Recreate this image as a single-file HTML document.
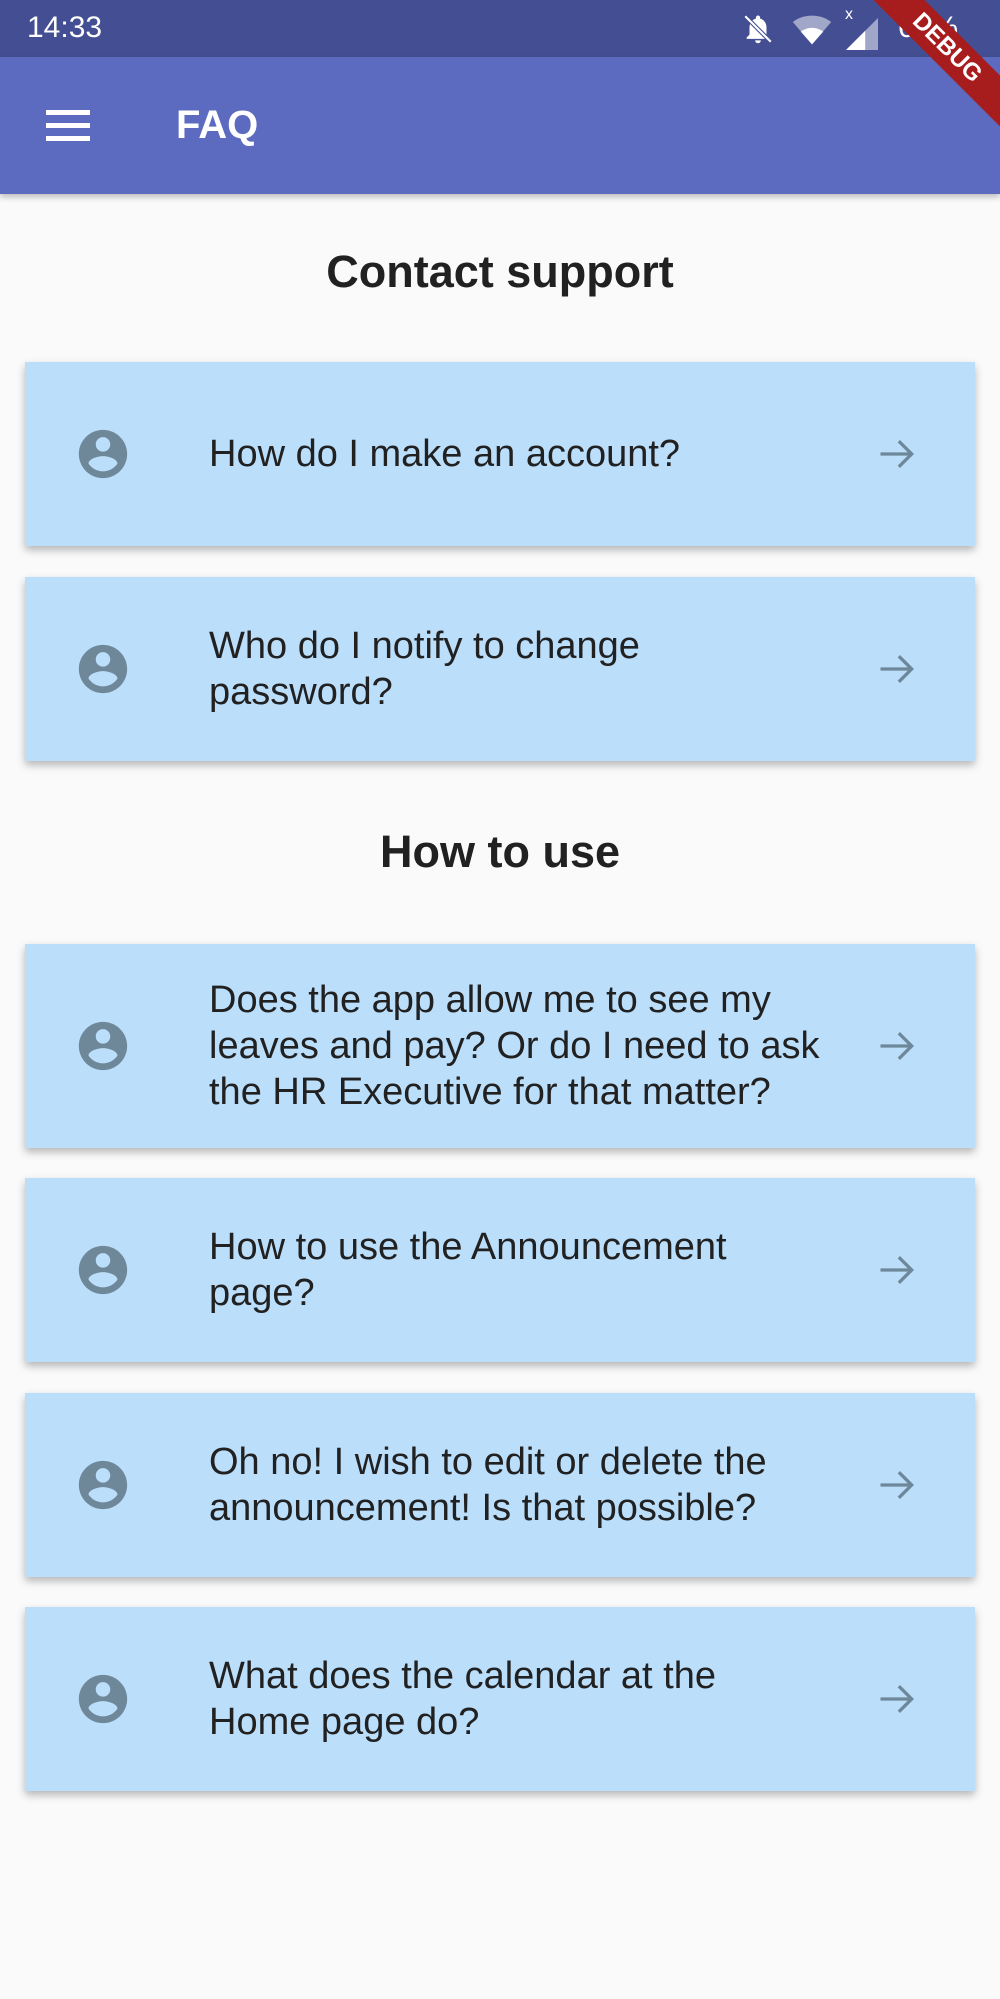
<!DOCTYPE html>
<html><head><meta charset="utf-8">
<style>
*{margin:0;padding:0;box-sizing:border-box}
body{width:1000px;height:1999px;background:#fafafa;font-family:"Liberation Sans",sans-serif;position:relative;overflow:hidden}
.status{position:absolute;left:0;top:0;width:1000px;height:57px;background:#434f92;color:#fff}
.time{position:absolute;left:27px;top:11px;font-size:30px}
.bar{position:absolute;left:0;top:57px;width:1000px;height:137px;background:#5c6bc0;box-shadow:0 3px 6px rgba(0,0,0,.25)}
.ham{position:absolute;left:46px;top:53px;width:44px}
.ham div{height:5px;background:#fff;margin-bottom:8px}
.title{position:absolute;left:176px;top:46px;color:#fff;font-size:40px;font-weight:bold}
h2{position:absolute;width:1000px;text-align:center;font-size:45px;color:#212121;font-weight:bold}
.card{position:absolute;left:25px;width:950px;background:#bbdefb;box-shadow:0 4px 8px rgba(0,0,0,.28)}
.card .ic{position:absolute;left:49px;top:50%;margin-top:-29px;width:58px;height:58px}
.card .tx{position:absolute;left:184px;top:50%;transform:translateY(-50%);font-size:38px;line-height:46px;color:#212121;white-space:nowrap}
.card .ar{position:absolute;left:850px;top:50%;margin-top:-22px;width:44px;height:44px}
.debug{position:absolute;right:-52px;top:30px;width:210px;height:36px;background:#a71c1c;color:#fff;font-weight:bold;font-size:24px;text-align:center;line-height:36px;transform:rotate(45deg)}
</style></head><body>
<div class="status"><span class="time">14:33</span>
<svg style="position:absolute;left:740px;top:12px" width="36" height="34" viewBox="0 0 24 24" fill="#fff"><path d="M12 22c1.1 0 2-.9 2-2h-4c0 1.1.9 2 2 2zm6-6v-5c0-3-1.6-5.6-4.5-6.3V4c0-.8-.7-1.5-1.5-1.5S10.5 3.2 10.5 4v.7C7.6 5.4 6 8 6 11v5l-2 2v1h16v-1z"/><path d="M3 3l18 18" stroke="#434f92" stroke-width="3"/><path d="M3 3l18 18" stroke="#fff" stroke-width="1.5"/></svg>
<svg style="position:absolute;left:792px;top:14px" width="40" height="32" viewBox="0 0 24 20"><path d="M12 19L0 5C3 2.5 7.3 1 12 1s9 1.5 12 4z" fill="#fff" opacity=".5"/><path d="M12 19L5 11c2-1.5 4.5-2.3 7-2.3s5 .8 7 2.3z" fill="#fff"/></svg>
<span style="position:absolute;left:845px;top:6px;color:#fff;font-size:16px">x</span>
<svg style="position:absolute;left:845px;top:18px" width="34" height="32" viewBox="0 0 20 20"><path d="M20 0V20H0z" fill="#fff" opacity=".5"/><path d="M12 8V20H0z" fill="#fff"/></svg>
<span style="position:absolute;left:898px;top:11px;color:#fff;font-size:30px">67%</span>
</div>
<div class="bar"><div class="ham"><div></div><div></div><div></div></div><div class="title">FAQ</div></div>
<div class="debug">DEBUG</div>
<h2 style="top:246px">Contact support</h2>
<h2 style="top:826px">How to use</h2>

<div class="card" style="top:362px;height:184px"><svg class="ic" viewBox="0 0 24 24"><path fill="#6e8799" d="M12 2C6.5 2 2 6.5 2 12s4.5 10 10 10 10-4.5 10-10S17.5 2 12 2zm0 3c1.7 0 3 1.3 3 3s-1.3 3-3 3-3-1.3-3-3 1.3-3 3-3zm0 14.2c-2.5 0-4.7-1.3-6-3.2 0-2 4-3.1 6-3.1s6 1.1 6 3.1c-1.3 1.9-3.5 3.2-6 3.2z"/></svg><div class="tx">How do I make an account?</div><svg class="ar" viewBox="0 0 24 24"><path d="M3 12h17M13 5l7 7-7 7" stroke="#6e8799" stroke-width="1.8" fill="none"/></svg></div>

<div class="card" style="top:577px;height:184px"><svg class="ic" viewBox="0 0 24 24"><path fill="#6e8799" d="M12 2C6.5 2 2 6.5 2 12s4.5 10 10 10 10-4.5 10-10S17.5 2 12 2zm0 3c1.7 0 3 1.3 3 3s-1.3 3-3 3-3-1.3-3-3 1.3-3 3-3zm0 14.2c-2.5 0-4.7-1.3-6-3.2 0-2 4-3.1 6-3.1s6 1.1 6 3.1c-1.3 1.9-3.5 3.2-6 3.2z"/></svg><div class="tx">Who do I notify to change<br>password?</div><svg class="ar" viewBox="0 0 24 24"><path d="M3 12h17M13 5l7 7-7 7" stroke="#6e8799" stroke-width="1.8" fill="none"/></svg></div>

<div class="card" style="top:944px;height:204px"><svg class="ic" viewBox="0 0 24 24"><path fill="#6e8799" d="M12 2C6.5 2 2 6.5 2 12s4.5 10 10 10 10-4.5 10-10S17.5 2 12 2zm0 3c1.7 0 3 1.3 3 3s-1.3 3-3 3-3-1.3-3-3 1.3-3 3-3zm0 14.2c-2.5 0-4.7-1.3-6-3.2 0-2 4-3.1 6-3.1s6 1.1 6 3.1c-1.3 1.9-3.5 3.2-6 3.2z"/></svg><div class="tx">Does the app allow me to see my<br>leaves and pay? Or do I need to ask<br>the HR Executive for that matter?</div><svg class="ar" viewBox="0 0 24 24"><path d="M3 12h17M13 5l7 7-7 7" stroke="#6e8799" stroke-width="1.8" fill="none"/></svg></div>

<div class="card" style="top:1178px;height:184px"><svg class="ic" viewBox="0 0 24 24"><path fill="#6e8799" d="M12 2C6.5 2 2 6.5 2 12s4.5 10 10 10 10-4.5 10-10S17.5 2 12 2zm0 3c1.7 0 3 1.3 3 3s-1.3 3-3 3-3-1.3-3-3 1.3-3 3-3zm0 14.2c-2.5 0-4.7-1.3-6-3.2 0-2 4-3.1 6-3.1s6 1.1 6 3.1c-1.3 1.9-3.5 3.2-6 3.2z"/></svg><div class="tx">How to use the Announcement<br>page?</div><svg class="ar" viewBox="0 0 24 24"><path d="M3 12h17M13 5l7 7-7 7" stroke="#6e8799" stroke-width="1.8" fill="none"/></svg></div>

<div class="card" style="top:1393px;height:184px"><svg class="ic" viewBox="0 0 24 24"><path fill="#6e8799" d="M12 2C6.5 2 2 6.5 2 12s4.5 10 10 10 10-4.5 10-10S17.5 2 12 2zm0 3c1.7 0 3 1.3 3 3s-1.3 3-3 3-3-1.3-3-3 1.3-3 3-3zm0 14.2c-2.5 0-4.7-1.3-6-3.2 0-2 4-3.1 6-3.1s6 1.1 6 3.1c-1.3 1.9-3.5 3.2-6 3.2z"/></svg><div class="tx">Oh no! I wish to edit or delete the<br>announcement! Is that possible?</div><svg class="ar" viewBox="0 0 24 24"><path d="M3 12h17M13 5l7 7-7 7" stroke="#6e8799" stroke-width="1.8" fill="none"/></svg></div>

<div class="card" style="top:1607px;height:184px"><svg class="ic" viewBox="0 0 24 24"><path fill="#6e8799" d="M12 2C6.5 2 2 6.5 2 12s4.5 10 10 10 10-4.5 10-10S17.5 2 12 2zm0 3c1.7 0 3 1.3 3 3s-1.3 3-3 3-3-1.3-3-3 1.3-3 3-3zm0 14.2c-2.5 0-4.7-1.3-6-3.2 0-2 4-3.1 6-3.1s6 1.1 6 3.1c-1.3 1.9-3.5 3.2-6 3.2z"/></svg><div class="tx">What does the calendar at the<br>Home page do?</div><svg class="ar" viewBox="0 0 24 24"><path d="M3 12h17M13 5l7 7-7 7" stroke="#6e8799" stroke-width="1.8" fill="none"/></svg></div>
</body></html>
